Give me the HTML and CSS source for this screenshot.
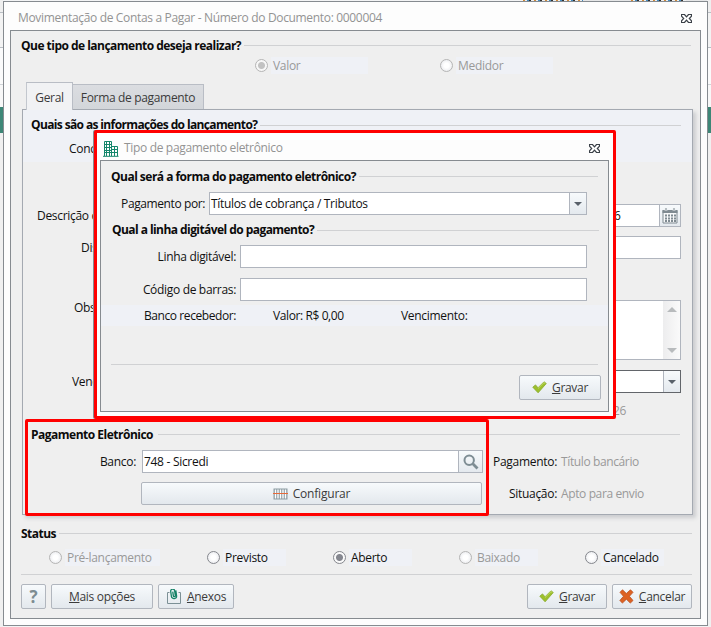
FILE: index.html
```html
<!DOCTYPE html>
<html lang="pt-BR">
<head>
<meta charset="utf-8">
<title>Movimentação de Contas a Pagar</title>
<link rel="stylesheet" href="styles.css">
</head>
<body>
<svg width="0" height="0" class="defs">
  <symbol id="close" viewBox="0 0 11 9"><path d="M.5 .5h3l2 2.400 2-2.400h3v1.600L8.300 4.500l2.200 2.400v1.600h-3l-2-2.400-2 2.400h-3V6.900L2.700 4.500.5 2.100z" fill="#fff" stroke="#3b4148" stroke-width="1.200"/></symbol>
  <symbol id="check" viewBox="0 0 15 13"><path d="M.8 6.200L3.500 3.900 6 6.800 12 .8l2.300 1.700L6.100 11.800z" fill="#9dc02c" stroke="#86a82a" stroke-width=".8"/><path d="M6 7.500L12 1.600l1.300 1" fill="none" stroke="#c6dd72" stroke-width=".9"/></symbol>
</svg>
<div class="edge left"></div>
<main class="window">
  <header class="titlebar"><span class="t-main">Movimentação de Contas a Pagar - Número do Documento: 0000004</span><svg class="x"><use href="#close"/></svg></header>
  <section class="panel">
    <div class="head first"><b class="t-tipo">Que tipo de lançamento deseja realizar?</b><i></i></div>
    <div class="radios kinds">
      <label class="radio off on"><u></u><span>Valor</span></label>
      <label class="radio off"><u></u><span>Medidor</span></label>
    </div>
    <nav class="tabs"><span class="tab active">Geral</span><span class="tab">Forma de pagamento</span></nav>
    <section class="sheet">
      <div class="tint">
        <div class="head"><b class="t-info">Quais são as informações do lançamento?</b><i></i></div>
        <div class="cond">Conc</div>
      </div>
      <div class="row desc"><span>Descrição c</span><div class="input date"><em>6</em><div class="addon"><svg width="16" height="16" viewBox="0 0 16 16"><path d="M1 2.500h14v12.500H1z" fill="#f7f8f9" stroke="#7f8a91"/><path d="M.5 2h15v3H.5z" fill="#7f8a91"/><path d="M4 0v3M12 0v3" stroke="#f0f2f4" stroke-width="2.500"/><path d="M4 0v3M12 0v3" stroke="#7f8a91"/><path d="M3 7.500h11M3 10.500h11M3 13h11" stroke="#7f8a91" stroke-width="2" stroke-dasharray="2 1"/></svg></div></div></div>
      <div class="row disp"><span>Dis</span><div class="input"></div></div>
      <div class="row obs"><span>Obs</span><div class="input area"><div class="scroll"><s class="up"></s><s></s></div></div></div>
      <div class="row venc"><span>Venc</span><div class="input select dark"><div class="addon"><s></s></div></div></div>
      <div class="year">26</div>
      <div class="head elet"><b class="t-elet">Pagamento Eletrônico</b><i></i></div>
      <div class="bank">
        <div class="lab">Banco:</div>
        <div class="input bankin"><span>748 - Sicredi</span><div class="addon"><svg width="16" height="16" viewBox="0 0 16 16"><circle cx="6.200" cy="6.200" r="4.700" fill="none" stroke="#7e8d94" stroke-width="2"/><path d="M9.800 9.800l4.700 4.700" stroke="#7e8d94" stroke-width="2.800"/></svg></div></div>
        <div class="info"><span class="k">Pagamento:</span><span class="v">Título bancário</span></div>
      </div>
      <div class="bank conf">
        <div class="lab"></div>
        <button class="btn wide"><svg width="15" height="12" viewBox="0 0 15 12"><path d="M.5.5h14v11H.5z" fill="#8c9ca3"/><path d="M2.500 1.500v9M5 1.500v9M7.500 1.500v9M10 1.500v9M12.500 1.500v9" stroke="#fff" stroke-width="1.400"/><path d="M0 5.500h15" stroke="#e66a3a"/></svg>Configurar</button>
        <div class="info"><span class="k">Situação:</span><span class="v">Apto para envio</span></div>
      </div>
    </section>
    <div class="head status"><b>Status</b><i></i></div>
    <div class="radios states">
      <label class="radio off"><u></u><span>Pré-lançamento</span></label>
      <label class="radio"><u></u><span>Previsto</span></label>
      <label class="radio on"><u></u><span>Aberto</span></label>
      <label class="radio off"><u></u><span>Baixado</span></label>
      <label class="radio"><u></u><span>Cancelado</span></label>
    </div>
    <footer class="foot">
      <button class="btn help">?</button>
      <button class="btn more"><span><ins>M</ins>ais opções</span></button>
      <button class="btn att"><svg width="16" height="16" viewBox="0 0 16 16"><path d="M3.500 3.500H1.500v11h13v-11h-2" fill="none" stroke="#7c9096"/><path d="M10.800 2.800v5.200a2.600 2.600 0 0 1-5.200 0V3a2 2 0 0 1 4 0v4.800a1 1 0 0 1-2 0V3.500" transform="translate(-.5 -1) rotate(-8 8 6)" fill="none" stroke="#168267" stroke-width="1.300"/></svg><span><ins>A</ins>nexos</span></button>
      <button class="btn save"><svg width="15" height="13"><use href="#check"/></svg><span><ins>G</ins>ravar</span></button>
      <button class="btn cancel"><svg width="15" height="15" viewBox="0 0 15 15"><path d="M3.500.8L7.300 4.500 11.500.8l2.500 2.500-3.600 4 3.600 4.200-2.700 2.600-3.900-3.900-4 3.900L.9 11.400l3.600-4.100-3.500-4z" fill="#dd6223" stroke="#b94f20" stroke-width=".8"/></svg><span><ins>C</ins>ancelar</span></button>
    </footer>
  </section>
</main>
<div class="edge right"></div>
<div class="toppeek"></div>

<div class="mark"></div>
<section class="dialog">
  <header class="dtitle"><svg width="16" height="17" viewBox="0 0 16 17"><path d="M1.500 16V1.500h7V16M8.500 6.500h6V16M0 16.300h15.500" fill="none" stroke="#14866b"/><path d="M3.500 1v11.500M6.500 1v11.500M1 4.500h8M1 7.500h8M1 10.500h8M1 12.500h13.500M11.500 6.500V13M9 9.500h5.500M3.500 12.500V16M6.500 12.500V16M11.500 13V16" stroke="#14866b"/></svg><span class="t-dlg">Tipo de pagamento eletrônico</span><svg class="x"><use href="#close"/></svg></header>
  <div class="dpanel">
    <div class="head d1"><b>Qual será a forma do pagamento eletrônico?</b><i></i></div>
    <div class="drow"><span class="dl por">Pagamento por:</span><div class="input select"><span class="t-sel">Títulos de cobrança / Tributos</span><div class="addon"><s></s></div></div></div>
    <div class="head d2"><b class="t-d2">Qual a linha digitável do pagamento?</b><i></i></div>
    <div class="drow"><span class="dl">Linha digitável:</span><div class="input"></div></div>
    <div class="drow cod"><span class="dl">Código de barras:</span><div class="input"></div></div>
    <div class="totals"><span class="dl rec">Banco recebedor:</span><span class="val">Valor: R$ 0,00</span><span class="ven">Vencimento:</span></div>
    <div class="dfoot"><button class="btn"><svg width="15" height="13"><use href="#check"/></svg><span><ins>G</ins>ravar</span></button></div>
  </div>
</section>
</body>
</html>
```
FILE: styles.css
```css
* { box-sizing: border-box; }
body { margin: 0; width: 711px; height: 627px; overflow: hidden; position: relative; display: flex; background: #f3f4f5; font: 12px/16px "Open Sans", "Noto Sans", sans-serif; letter-spacing: -.3px; color: #111; white-space: nowrap; }
.defs { position: absolute; }
.edge { width: 3px; height: 627px; flex: none; background: linear-gradient(#efefef 12px, #b9bec4 12px 13px, #f3f3f3 13px 47px, #b9bec4 47px 48px, #fbfbfb 48px 84px, #d0d4d8 84px 85px, #f8f8f8 85px 107px, #3d8676 107px 133px, #f0f0f0 133px); }
.toppeek { position: absolute; left: 523px; top: 0; width: 184px; height: 1px; background: repeating-linear-gradient(90deg, #d08a3a 0 2px, #efefef 2px 4px, #438bc0 4px 6px, #333 6px 8px, #efefef 8px 11px) 0 0 / 60px 1px no-repeat, repeating-linear-gradient(90deg, #d08a3a 0 2px, #efefef 2px 4px, #438bc0 4px 6px, #333 6px 8px, #efefef 8px 11px) 108px 0 / 55px 1px no-repeat, #e5e6e7; }
.window { width: 705px; height: 625px; margin-top: 1px; border: 1px solid #868b90; background: #fdfdfd; flex: none; }
.titlebar { height: 28px; display: flex; align-items: center; padding: 4px 15px 0 14px; color: #939393; justify-content: space-between; }
.t-main { letter-spacing: -.33px; }
.x { width: 11px; height: 9px; display: block; }
.panel { height: 589px; margin: 0 6px; border: 1px solid #868b90; background: #efefef; }
.head { display: flex; align-items: center; gap: 3px; }
.head b { color: #0b0b0b; letter-spacing: -.52px; }
.head .t-info { letter-spacing: -.63px; }
.head .t-d2 { letter-spacing: -.56px; }
.head .t-elet { letter-spacing: -.5px; }
.head i { flex: 1; height: 1px; background: #d0d1d3; }
.first { height: 26px; padding: 3px 9px 0 10px; }
.radios { display: flex; }
.radio { display: flex; align-items: center; gap: 5px; height: 17px; background: linear-gradient(90deg, transparent 16px, #eff1f6 16px); flex: none; color: #111; }
.radio u { width: 13px; height: 13px; border: 1px solid #85878d; border-radius: 50%; background: radial-gradient(#fff 30%, #ecedf0 75%); }
.radio.on u { background: radial-gradient(circle, #85878f 0 3px, #fafafa 4px); }
.radio.off { color: #999; }
.radio.off u { border-color: #b5b5b5; }
.radio.off.on u { background: radial-gradient(circle, #c2c2c2 0 3px, #f7f7f7 4px); }
.kinds { padding-left: 244px; }
.kinds .radio { width: 113px; margin-right: 72px; }
.tabs { display: flex; align-items: flex-end; height: 27px; margin: 8px 0 0 15px; }
.tab { height: 25px; width: 131px; border: 1px solid #b9bdc5; border-bottom: 0; border-left: 0; background: linear-gradient(#dbdde1, #d3d6da); display: flex; align-items: center; justify-content: center; color: #3b3b3b; padding-top: 2px; letter-spacing: -.33px; }
.tab.active { height: 28px; width: 47px; border-left: 1px solid #c3c7ce; background: #f1f2f4; margin-bottom: -1px; position: relative; }
.sheet { margin-left: 11px; width: 671px; height: 406px; border: 1px solid #a4a9b1; box-shadow: 3px 3px 4px #cbcccf; background: #efefef; }
.tint { background: #eff1f6; height: 52px; }
.tint .head { height: 30px; padding: 0 11px 0 8px; }
.cond { padding-left: 46px; line-height: 17px; }
.row { display: flex; justify-content: space-between; align-items: center; padding-right: 11px; height: 23px; }
.input { height: 23px; border: 1px solid #b0b5be; background: #fff; display: flex; align-items: center; justify-content: space-between; color: #111; }
.row .input { width: 100px; }
.desc { margin-top: 42px; padding-left: 14px; }
.disp { margin-top: 9px; padding-left: 58px; }
.obs { margin-top: 41px; padding-left: 51px; height: 60px; align-items: flex-start; }
.venc { margin-top: 10px; padding-left: 49px; }
.row .area { height: 60px; justify-content: flex-end; }
.date em { font-style: normal; margin-left: 32px; }
.addon { width: 21px; height: 21px; margin-left: auto; border-left: 1px solid #b0b5be; background: linear-gradient(#f7fafc, #e4e9ee); display: flex; align-items: center; justify-content: center; }
.select .addon { width: 17px; }
s { border: 0 solid transparent; border-width: 4px 4px 0; border-top-color: #59616a; }
.scroll { width: 17px; height: 58px; background: linear-gradient(90deg, #ededee, #fafafa); display: flex; flex-direction: column; align-items: center; justify-content: space-between; padding: 6px 0; }
.scroll s { border-width: 5px 5px 0; border-color: #b8bbbd transparent transparent; }
.scroll .up { border-width: 0 5px 5px; border-color: transparent transparent #b8bbbd; }
.dark { border-color: #62656a; }
.year { height: 29px; padding: 10px 0 0 590px; color: #999; }
.elet { height: 28px; padding: 0 12px 3px 8px; gap: 5px; }
.bank { display: flex; align-items: center; height: 23px; }
.lab { width: 118px; text-align: right; padding-right: 5px; flex: none; }
.bankin { width: 341px; margin-left: 1px; padding-left: 1px; flex: none; }
.bankin .addon { width: 24px; }
.info { display: flex; gap: 4px; padding-top: 1px; }
.info .k { width: 74px; text-align: right; }
.v { color: #999; letter-spacing: -.38px; }
.bank.conf { margin-top: 9px; }
.btn { font: inherit; letter-spacing: inherit; height: 25px; border: 1px solid #b1b6be; border-radius: 2px; background: linear-gradient(#f7fafc, #e3e8ed); color: #3b3b3b; display: flex; align-items: center; justify-content: center; gap: 5px; padding: 0; }
.wide { width: 341px; height: 23px; flex: none; letter-spacing: -.2px; }
.conf .info { margin-left: 1px; }
.status { padding: 2px 8px 0 10px; height: 33px; margin-top: 1px; }
.states { padding-left: 38px; }
.states .radio { width: 79px; margin-right: 47px; }
.states .radio:first-child { width: 111px; }
.foot { display: flex; gap: 5px; margin: 8px 8px 0 10px; border-top: 1px solid #d0d1d3; padding-top: 9px; }
.help { width: 25px; font-weight: 700; font-size: 17px; color: #7d8c92; }
.more { width: 102px; }
.att { width: 76px; }
.save { width: 80px; margin-left: auto; }
.cancel { width: 80px; }
.mark { position: absolute; left: 25px; top: 419px; width: 464px; height: 97px; border: 3px solid #f00; border-radius: 2px; }
.dialog { position: absolute; left: 94px; top: 130px; width: 522px; height: 289px; border: 3px solid #f00; border-radius: 2px; background: #fdfdfd; box-shadow: -1px 0 #868b90; }
.dtitle { height: 27px; display: flex; align-items: center; padding: 3px 13px 0 6px; color: #939393; gap: 5px; }
.t-dlg { letter-spacing: -.33px; }
.dtitle .x { margin-left: auto; }
.dpanel { height: 252px; margin: 0 4px 0 3px; border: 1px solid #868b90; background: #efefef; }
.d1 { height: 31px; padding: 0 10px 0 10px; }
.drow { display: flex; align-items: center; height: 23px; padding-right: 21px; }
.drow .input { flex: 1; }
.dl { width: 139px; text-align: right; padding-right: 4px; flex: none; letter-spacing: -.32px; }
.por { width: 108px; letter-spacing: -.4px; }
.rec { letter-spacing: -.42px; }
.t-sel { padding-left: 1px; letter-spacing: -.32px; }
.d2 { height: 30px; padding: 0 9px 0 11px; }
.cod { margin-top: 10px; }
.totals { display: flex; align-items: center; margin-top: 4px; height: 21px; background: #eff1f6; }
.val { width: 128px; margin-left: 33px; letter-spacing: -.4px; }
.dfoot { margin: 38px 7px 0 10px; padding-top: 11px; background: linear-gradient(#d0d1d3, #d0d1d3) 0 0 / 487px 1px no-repeat; display: flex; justify-content: flex-end; }
.dfoot .btn { width: 82px; }
```
